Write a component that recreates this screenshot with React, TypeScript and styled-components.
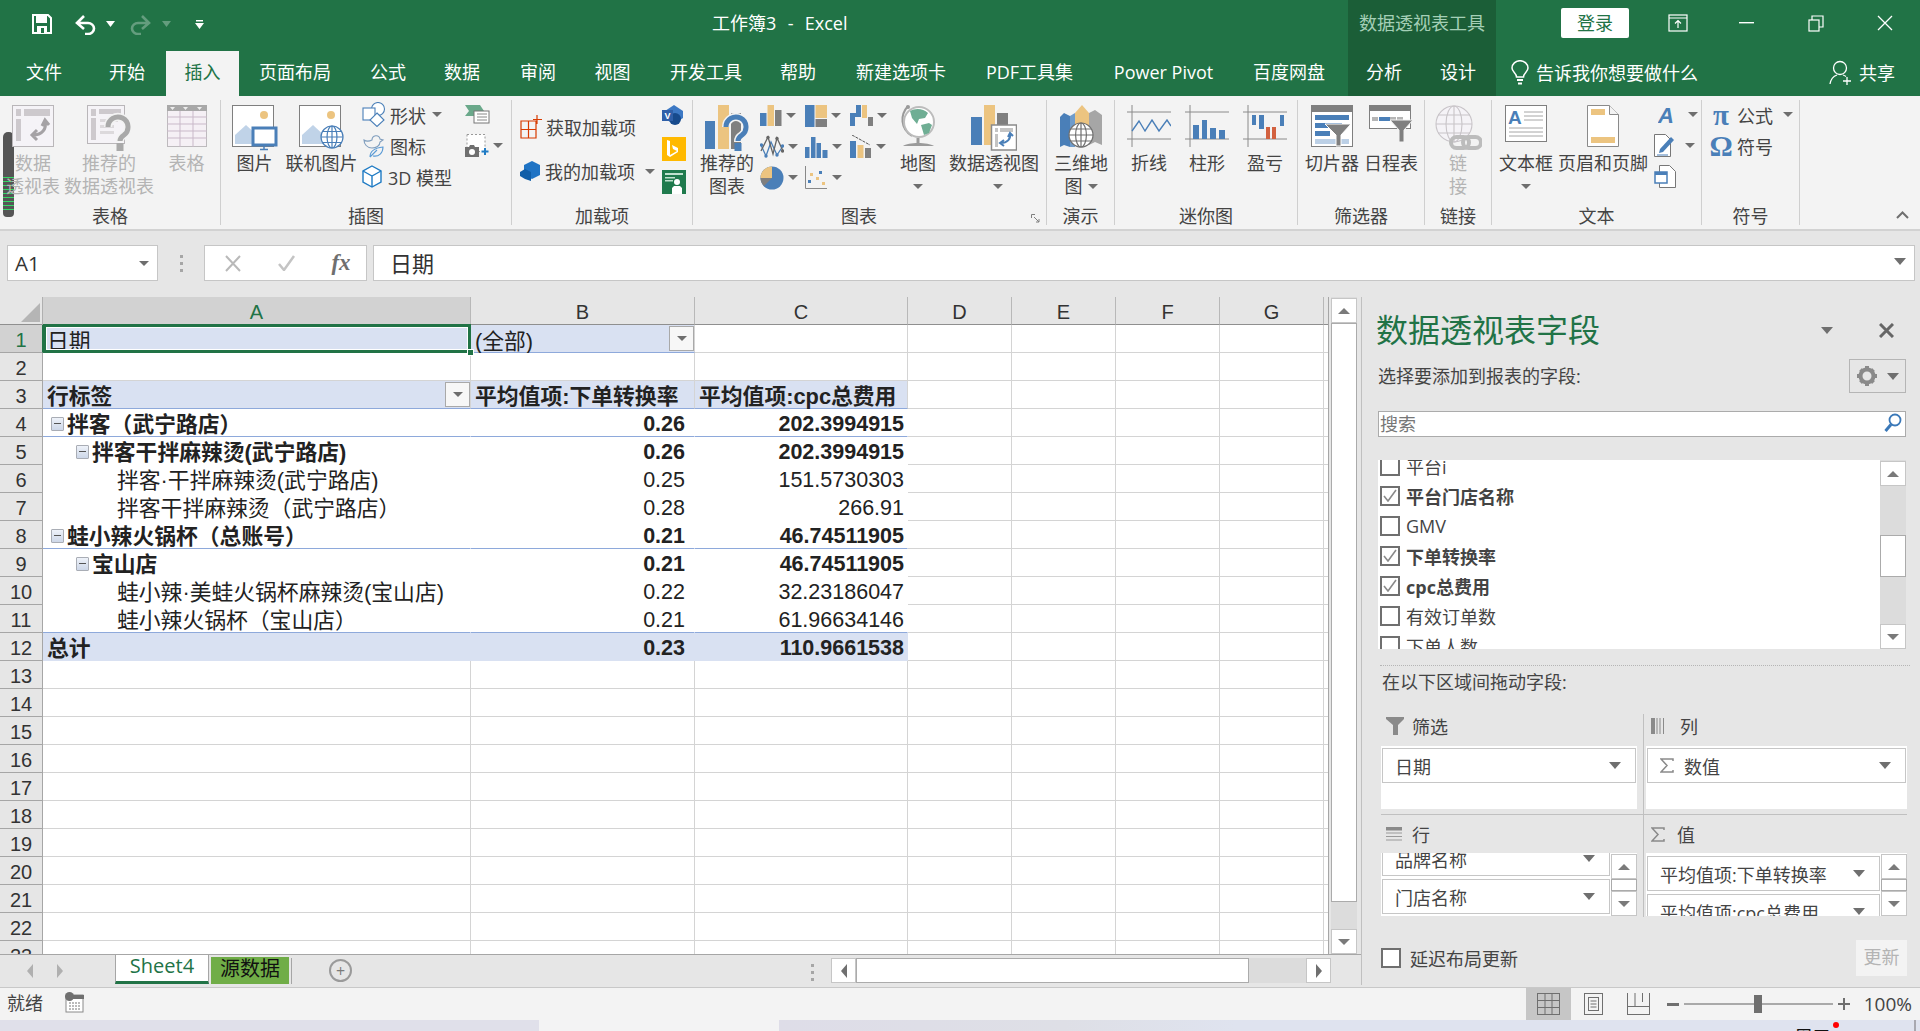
import React from 'react';
import styled, {createGlobalStyle} from 'styled-components';

const UI = `"Open Sans", "Noto Sans CJK SC", sans-serif`;
const CELL = `"Liberation Sans", "Noto Sans CJK SC", sans-serif`;
const GREEN = '#217346';
const BLUE = '#4a7fb8';
const TAN = '#ecc480';
const GREY = '#7f7f7f';
const FILL = '#d9e1f2';
const EDGE = '#8ea9db';
const GRID = '#d4d4d4';

const Global = createGlobalStyle`
  html, body { margin: 0; padding: 0; background: #e6e6e6; }
  body { width: 1920px; height: 1031px; overflow: hidden; font-family: ${UI}; }
  svg { display: block; flex: none; }
  * { box-sizing: border-box; }
`;

const Page = styled.div`
  width: 1920px;
  height: 1031px;
  display: flex;
  flex-direction: column;
  position: relative;
  overflow: hidden;
`;

/* ---------- title bar + tabs ---------- */
const Header = styled.header`
  background: ${GREEN};
  color: #fff;
  height: 96px;
  display: flex;
  flex-direction: column;
`;
const TitleRow = styled.div`
  height: 51px;
  display: flex;
  align-items: stretch;
`;
const Qat = styled.div`
  width: 712px;
  flex: none;
  padding: 0 0 3px 32px;
  display: flex;
  align-items: center;
`;
const QatGap = styled.span<{$w: number}>`
  display: block;
  width: ${p => p.$w}px;
  flex: none;
`;
const Title = styled.div`
  width: 636px;
  flex: none;
  font-size: 18px;
  line-height: 46px;
  white-space: pre;
  word-spacing: 1px;
`;
const ToolsBand = styled.div`
  width: 148px;
  flex: none;
  background: #1b5e37;
  color: #a4cfb6;
  font-size: 18px;
  line-height: 46px;
  text-align: center;
  white-space: nowrap;
`;
const WindowBtns = styled.div`
  flex: 1;
  display: flex;
  align-items: center;
  padding: 0 0 5px 65px;
`;
const Login = styled.div`
  width: 68px;
  height: 30px;
  flex: none;
  background: #fff;
  border-radius: 2px;
  color: ${GREEN};
  font-size: 18px;
  line-height: 30px;
  text-align: center;
  margin-right: 14px;
`;
const WinIcon = styled.div`
  width: 69px;
  flex: none;
  display: flex;
  justify-content: center;
`;
const TabRow = styled.nav`
  height: 45px;
  display: flex;
  align-items: stretch;
`;
const Tab = styled.div<{$w: number; $active?: boolean}>`
  width: ${p => p.$w}px;
  flex: none;
  font-size: 18px;
  line-height: 42px;
  text-align: center;
  white-space: nowrap;
  background: ${p => (p.$active ? '#f3f3f3' : 'transparent')};
  color: ${p => (p.$active ? GREEN : '#fff')};
`;
const ContextTabs = styled.div`
  width: 148px;
  flex: none;
  margin-left: 8px;
  background: #1b5e37;
  display: flex;
`;
const TellMe = styled.div`
  display: flex;
  align-items: center;
  gap: 7px;
  font-size: 18px;
  margin-left: 15px;
  padding-bottom: 3px;
  width: 318px;
  flex: none;
  white-space: nowrap;
`;
const Share = styled.div`
  display: flex;
  align-items: center;
  gap: 6px;
  font-size: 18px;
  padding-bottom: 3px;
  white-space: nowrap;
`;

/* ---------- ribbon ---------- */
const Ribbon = styled.section`
  height: 135px;
  background: #f3f3f3;
  border-bottom: 2px solid #d2d2d2;
  padding-top: 4px;
  display: flex;
  color: #444;
  font-size: 18px;
  position: relative;
`;
const Group = styled.div<{$w: number}>`
  width: ${p => p.$w}px;
  height: 125px;
  flex: none;
  border-right: 1px solid #cfcfcf;
  display: flex;
  flex-direction: column;
  position: relative;
`;
const GroupBody = styled.div<{$pl?: number}>`
  height: 107px;
  display: flex;
  padding-left: ${p => p.$pl ?? 0}px;
`;
const GroupLabel = styled.div<{$pr?: number}>`
  height: 18px;
  line-height: 18px;
  text-align: center;
  white-space: nowrap;
  padding-right: ${p => p.$pr ?? 0}px;
`;
const Large = styled.div<{$w: number; $off?: boolean}>`
  width: ${p => p.$w}px;
  flex: none;
  display: flex;
  flex-direction: column;
  align-items: center;
  padding-top: 5px;
  color: ${p => (p.$off ? '#b4b4b4' : '#444')};
`;
const LargeIcon = styled.div`
  height: 47px;
  display: flex;
  align-items: flex-start;
  justify-content: center;
`;
const LargeLine = styled.div`
  height: 23px;
  line-height: 23px;
  white-space: nowrap;
  display: flex;
  align-items: center;
  gap: 5px;
`;
const Caret = styled.span<{$m?: number}>`
  display: block;
  flex: none;
  width: 0;
  height: 0;
  border-left: 5px solid transparent;
  border-right: 5px solid transparent;
  border-top: 5px solid #6e6e6e;
  margin-left: ${p => p.$m ?? 0}px;
`;
const SmallCol = styled.div<{$w: number; $rh?: number; $pt?: number; $pl?: number}>`
  width: ${p => p.$w}px;
  flex: none;
  display: flex;
  flex-direction: column;
  padding-top: ${p => p.$pt ?? 0}px;
  padding-left: ${p => p.$pl ?? 0}px;
  > * { height: ${p => p.$rh ?? 31}px; }
`;
const SmallRow = styled.div<{$gap?: number}>`
  display: flex;
  align-items: center;
  gap: ${p => p.$gap ?? 3}px;
  white-space: nowrap;
  padding-bottom: 2px;
`;
const ChartGrid = styled.div`
  width: 135px;
  flex: none;
  margin-left: 7px;
  display: grid;
  grid-template-columns: repeat(3, 45px);
  grid-auto-rows: 31px;
`;
const ChartCell = styled.div`
  display: flex;
  align-items: center;
  gap: 4px;
`;
const Launcher = styled.div`
  position: absolute;
  right: 6px;
  bottom: 2px;
`;
const Collapse = styled.div`
  margin-left: auto;
  align-self: flex-end;
  padding: 0 11px 10px 0;
`;
const MeterWidget = styled.div`
  position: absolute;
  left: 3px;
  top: 36px;
  width: 11px;
  height: 85px;
  border-radius: 5px 5px 4px 4px;
  background: #555;
  padding-top: 45px;
  overflow: hidden;
`;
const MeterTicks = styled.div`
  height: 36px;
  background: repeating-linear-gradient(to bottom, #35d765 0 1px, #555 1px 4px);
`;
const SymbolGlyph = styled.span`
  flex: 0 0 20px;
  width: 20px;
  min-width: 0;
  display: flex;
  justify-content: center;
  font-family: "Liberation Serif", serif;
  font-weight: 700;
  font-size: 29px;
  line-height: 24px;
  color: ${BLUE};
`;

/* ---------- formula bar ---------- */
const FormulaZone = styled.div`
  height: 66px;
  padding: 14px 5px 0 7px;
  display: flex;
  align-items: flex-start;
  background: #e6e6e6;
`;
const NameBox = styled.div`
  width: 151px;
  height: 36px;
  background: #fff;
  border: 1px solid #c6c6c6;
  display: flex;
  align-items: center;
  justify-content: space-between;
  padding: 0 8px 0 7px;
  font-size: 20.500px;
  color: #333;
`;
const BarDots = styled.div`
  width: 46px;
  height: 36px;
  display: flex;
  flex-direction: column;
  align-items: center;
  justify-content: center;
  gap: 4px;
  > i { display: block; width: 3px; height: 3px; background: #a6a6a6; }
`;
const FxBox = styled.div`
  width: 163px;
  height: 36px;
  background: #fff;
  border: 1px solid #c6c6c6;
  display: grid;
  grid-template-columns: 55px 54px 54px;
  align-items: center;
  justify-items: center;
  color: #888;
`;
const FxMark = styled.span`
  font-family: "Liberation Serif", serif;
  font-style: italic;
  font-weight: 700;
  font-size: 23px;
  color: #6f6f6f;
`;
const FormulaInput = styled.div`
  flex: 1;
  margin-left: 6px;
  height: 36px;
  background: #fff;
  border: 1px solid #c6c6c6;
  display: flex;
  align-items: center;
  justify-content: space-between;
  padding: 0 8px 3px 16px;
  font-size: 22px;
  color: #333;
`;

/* ---------- sheet ---------- */
const Main = styled.main`
  height: 690px;
  display: flex;
`;
const SheetCol = styled.div`
  width: 1361px;
  flex: none;
  display: flex;
  flex-direction: column;
`;
const SheetTop = styled.div`
  height: 657px;
  display: flex;
  background: #e6e6e6;
`;
const SheetGrid = styled.div`
  width: 1329px;
  height: 657px;
  overflow: hidden;
  flex: none;
  display: grid;
  grid-template-columns: 43px 428px 224px 213px 104px 104px 104px 104px 5px;
  grid-auto-rows: 28px;
  background: #fff;
  border-right: 1px solid #a6a6a6;
  font-family: ${CELL};
  color: #222;
`;
const Corner = styled.div`
  background: #e6e6e6;
  border-right: 1px solid #b0b0b0;
  border-bottom: 1px solid #8f8f8f;
  padding: 6px 0 0 21px;
`;
const ColHead = styled.div<{$on?: boolean}>`
  background: ${p => (p.$on ? '#d2d2d2' : '#e6e6e6')};
  color: ${p => (p.$on ? GREEN : '#333')};
  border-right: 1px solid #b8b8b8;
  border-bottom: 1px solid ${p => (p.$on ? GREEN : '#8f8f8f')};
  text-align: center;
  font-size: 20px;
  line-height: 31px;
`;
const RowHead = styled.div<{$on?: boolean}>`
  background: ${p => (p.$on ? '#d2d2d2' : '#e6e6e6')};
  color: ${p => (p.$on ? GREEN : '#333')};
  border-right: 1px solid ${p => (p.$on ? GREEN : '#a6a6a6')};
  border-bottom: 1px solid #a6a6a6;
  text-align: center;
  font-size: 20px;
  line-height: 31px;
`;
const Cell = styled.div<{$fill?: boolean; $edge?: boolean; $plain?: boolean; $num?: boolean; $bold?: boolean; $pr?: number; $pt?: number}>`
  background: ${p => (p.$fill ? FILL : '#fff')};
  border-right: 1px solid ${p => (p.$plain ? 'transparent' : GRID)};
  border-bottom: 1px solid ${p => (p.$edge ? EDGE : p.$plain ? 'transparent' : GRID)};
  font-weight: ${p => (p.$bold ? 700 : 400)};
  font-size: ${p => (p.$num ? 21.5 : 21.8)}px;
  display: flex;
  align-items: center;
  justify-content: ${p => (p.$num ? 'flex-end' : 'flex-start')};
  padding: ${p => p.$pt ?? (p.$num ? 3 : 0)}px ${p => p.$pr ?? 4}px 0 4px;
  white-space: nowrap;
  position: relative;
  min-width: 0;
`;
const SelectedCell = styled(Cell)`
  &::after {
    content: '';
    position: absolute;
    inset: -1px -1px -1px 0;
    border: 3px solid ${GREEN};
    box-shadow: inset 0 0 0 1px #fff;
    pointer-events: none;
  }
`;
const FillHandle = styled.span`
  position: absolute;
  right: -4px;
  bottom: -4px;
  width: 7px;
  height: 7px;
  background: ${GREEN};
  border: 1px solid #fff;
  z-index: 2;
`;
const Indent = styled.span<{$w: number}>`
  display: flex;
  align-items: center;
  justify-content: flex-end;
  width: ${p => p.$w}px;
  flex: none;
  padding: 2px 3px 0 0;
`;
const Expander = styled.span`
  display: block;
  width: 13px;
  height: 14px;
  flex: none;
  background: linear-gradient(#eef2f9, #cdd7e8);
  border: 1px solid #a9adb5;
  border-radius: 1px;
  position: relative;
  &::after {
    content: '';
    position: absolute;
    left: 2px;
    right: 2px;
    top: 5px;
    height: 1px;
    background: #555;
  }
`;
const FilterBtn = styled.span`
  position: absolute;
  right: 0;
  top: 1px;
  width: 25px;
  height: 25px;
  background: #f7f7f7;
  border: 1px solid #a9a9a9;
  display: flex;
  align-items: center;
  justify-content: center;
`;

/* ---------- scroll bars ---------- */
const VScroll = styled.div`
  width: 26px;
  margin-left: 2px;
  display: flex;
  flex-direction: column;
  background: #dcdcdc;
  padding-top: 1px;
`;
const ScrollBtn = styled.div<{$h?: number}>`
  height: ${p => p.$h ?? 25}px;
  flex: none;
  background: #fff;
  border: 1px solid #c6c6c6;
  display: flex;
  align-items: center;
  justify-content: center;
`;
const ScrollThumb = styled.div<{$h: number; $mt?: number}>`
  height: ${p => p.$h}px;
  flex: none;
  background: #fff;
  border: 1px solid #ababab;
  margin-top: ${p => p.$mt ?? 0}px;
`;
const ScrollFill = styled.div`
  flex: 1;
`;
const Up = styled.span`
  display: block;
  width: 0;
  height: 0;
  border-left: 6px solid transparent;
  border-right: 6px solid transparent;
  border-bottom: 6px solid #7a7a7a;
`;
const Down = styled(Up)`
  border-bottom: 0;
  border-top: 6px solid #7a7a7a;
`;
const LeftTri = styled.span`
  display: block;
  width: 0;
  height: 0;
  border-top: 7px solid transparent;
  border-bottom: 7px solid transparent;
  border-right: 6px solid #6f6f6f;
`;
const RightTri = styled(LeftTri)`
  border-right: 0;
  border-left: 6px solid #6f6f6f;
`;

/* ---------- sheet tabs ---------- */
const TabsBar = styled.div`
  height: 33px;
  display: flex;
  background: #e6e6e6;
  border-top: 1px solid #a6a6a6;
`;
const TabNav = styled.div`
  width: 115px;
  flex: none;
  display: flex;
  align-items: center;
  padding: 0 0 0 27px;
  gap: 24px;
  opacity: 0.45;
`;
const SheetTab = styled.div`
  width: 94px;
  height: 29px;
  background: #fff;
  border-left: 1px solid #a6a6a6;
  border-right: 1px solid #a6a6a6;
  border-bottom: 3px solid ${GREEN};
  color: ${GREEN};
  font-size: 20px;
  line-height: 22px;
  text-align: center;
`;
const SheetTabColored = styled.div`
  width: 78px;
  height: 27px;
  margin: 2px 0 0 2px;
  background: #70ad47;
  color: #111;
  font-size: 20px;
  line-height: 24px;
  text-align: center;
`;
const TabSep = styled.div`
  width: 1px;
  height: 26px;
  margin: 3px 0 0 2px;
  background: #a6a6a6;
`;
const AddSheet = styled.div`
  width: 23px;
  height: 23px;
  margin: 4px 0 0 37px;
  border: 2px solid #9a9a9a;
  border-radius: 50%;
  color: #7a7a7a;
  display: flex;
  align-items: center;
  justify-content: center;
`;
const TabDots = styled.div`
  width: 3px;
  margin: 9px 0 0 459px;
  display: flex;
  flex-direction: column;
  gap: 4px;
  > i { display: block; width: 3px; height: 3px; background: #a6a6a6; }
`;
const HScroll = styled.div`
  width: 500px;
  height: 25px;
  margin: 3px 0 0 17px;
  background: #dcdcdc;
  display: flex;
`;
const HBtn = styled.div`
  width: 25px;
  flex: none;
  background: #fff;
  border: 1px solid #c6c6c6;
  display: flex;
  align-items: center;
  justify-content: center;
`;
const HThumb = styled.div`
  width: 393px;
  flex: none;
  background: #fff;
  border: 1px solid #ababab;
`;

/* ---------- pivot pane ---------- */
const Pane = styled.aside`
  width: 559px;
  flex: none;
  background: #e6e6e6;
  border-left: 1px solid #c0c0c0;
  margin-bottom: 2px;
  padding: 13px 14px 0 16px;
  color: #444;
  font-size: 18px;
  display: flex;
  flex-direction: column;
`;
const PaneTitleRow = styled.div`
  height: 40px;
  display: flex;
  align-items: center;
  margin-bottom: 9px;
`;
const PaneTitle = styled.h2`
  margin: 0 0 0 -2px;
  font-size: 32px;
  font-weight: 400;
  color: ${GREEN};
  width: 445px;
  line-height: 40px;
  white-space: nowrap;
`;
const PaneClose = styled.div`
  margin-left: 46px;
`;
const FieldHead = styled.div`
  height: 34px;
  display: flex;
  align-items: center;
  justify-content: space-between;
  margin-bottom: 18px;
`;
const FieldHint = styled.span`
  margin-top: -2px;
`;
const GearBtn = styled.div`
  width: 57px;
  height: 34px;
  border: 1px solid #b5b5b5;
  display: flex;
  align-items: center;
  justify-content: center;
  gap: 10px;
`;
const SearchBox = styled.div`
  height: 26px;
  background: #fff;
  border: 1px solid #ababab;
  display: flex;
  align-items: center;
  justify-content: space-between;
  padding: 0 3px 2px 1px;
  color: #777;
  margin-bottom: 23px;
`;
const FieldList = styled.div`
  height: 189px;
  background: #fff;
  display: flex;
  overflow: hidden;
  margin-bottom: 16px;
`;
const FieldRows = styled.div`
  flex: 1;
  margin-top: -8px;
  padding-left: 2px;
`;
const FieldRow = styled.div<{$on?: boolean}>`
  height: 30px;
  display: flex;
  align-items: center;
  gap: 6px;
  padding-bottom: 2px;
  font-weight: ${p => (p.$on ? 700 : 400)};
  white-space: nowrap;
`;
const Check = styled.span`
  width: 20px;
  height: 20px;
  flex: none;
  border: 2px solid #6f6f6f;
  background: #fff;
  display: flex;
  align-items: center;
  justify-content: center;
  margin-top: -1px;
`;
const Dotted = styled.div`
  height: 1px;
  margin-left: 2px;
  margin-right: -4px;
  border-top: 1px dotted #b5b5b5;
`;
const DragLabel = styled.div`
  height: 34px;
  line-height: 33px;
  margin: 0 0 14px 4px;
`;
const Areas = styled.div`
  margin-left: 3px;
  width: 526px;
  display: grid;
  grid-template-columns: 263px 263px;
  grid-template-rows: 101px 102px;
`;
const Area = styled.div<{$left?: boolean; $top?: boolean}>`
  border-right: ${p => (p.$left ? '1px solid #c0c0c0' : '0')};
  border-bottom: ${p => (p.$top ? '1px solid #c0c0c0' : '0')};
  padding-left: ${p => (p.$left ? 0 : 2)}px;
  display: flex;
  flex-direction: column;
`;
const AreaHead = styled.div<{$top?: boolean; $gap?: number}>`
  height: ${p => (p.$top ? 32 : 38)}px;
  flex: none;
  padding: 0 0 ${p => (p.$top ? 8 : 0)}px 5px;
  display: flex;
  align-items: center;
  gap: ${p => p.$gap ?? 8}px;
`;
const AreaBox = styled.div<{$w: number}>`
  width: ${p => p.$w}px;
  height: 63px;
  background: #fff;
  overflow: hidden;
  padding: 2px 1px;
`;
const AreaList = styled.div<{$w?: number}>`
  height: 63px;
  width: ${p => p.$w ?? 256}px;
  display: flex;
  gap: 1px;
  overflow: hidden;
  background: #fff;
`;
const AreaItems = styled.div<{$offset: number}>`
  flex: 1;
  min-width: 0;
  margin-top: ${p => p.$offset}px;
  display: flex;
  flex-direction: column;
  gap: 3px;
  padding-left: 1px;
`;
const AreaItem = styled.div`
  height: 35px;
  flex: none;
  background: #fff;
  border: 1px solid #c6c6c6;
  display: flex;
  align-items: center;
  padding: 0 14px 0 12px;
  white-space: nowrap;
  justify-content: space-between;
`;
const ItemText = styled.span`
  display: flex;
  align-items: center;
  gap: 10px;
`;
const AreaScroll = styled.div`
  width: 26px;
  flex: none;
  display: flex;
  flex-direction: column;
  padding-top: 1px;
  background: #fff;
`;
const PaneFoot = styled.div`
  margin: 23px 0 0 3px;
  width: 526px;
  height: 36px;
  display: flex;
  align-items: center;
  justify-content: space-between;
`;
const Deferred = styled.div`
  display: flex;
  align-items: center;
  gap: 9px;
`;
const UpdateBtn = styled.div`
  width: 51px;
  height: 36px;
  background: #f3f3f3;
  color: #b4b4b4;
  line-height: 34px;
  text-align: center;
`;

/* ---------- status bar ---------- */
const Status = styled.footer`
  height: 33px;
  background: #f3f3f3;
  border-top: 1px solid #c8c8c8;
  display: flex;
  align-items: center;
  padding-left: 7px;
  font-size: 18px;
  color: #444;
`;
const StatusLeft = styled.div`
  display: flex;
  align-items: center;
  gap: 22px;
  margin-top: -4px;
`;
const StatusRight = styled.div`
  margin-left: auto;
  height: 100%;
  display: flex;
  align-items: center;
  padding-right: 8px;
`;
const ViewBtn = styled.div<{$on?: boolean}>`
  width: 45px;
  height: 100%;
  background: ${p => (p.$on ? '#c6c6c6' : 'transparent')};
  display: flex;
  align-items: center;
  justify-content: center;
`;
const ZoomTrack = styled.div`
  width: 149px;
  height: 2px;
  margin: 0 5px;
  background: #a9a9a9;
  position: relative;
`;
const ZoomThumb = styled.span`
  position: absolute;
  left: 70px;
  top: -8px;
  width: 8px;
  height: 18px;
  background: #6f6f6f;
`;
const ZoomValue = styled.span`
  margin-left: 14px;
  font-size: 19px;
`;
const DeskStrip = styled.div`
  height: 11px;
  display: flex;
  overflow: hidden;
`;
const DeskLeft = styled.div`
  width: 539px;
  background: #e0e0ea;
`;
const DeskGap = styled.div`
  width: 240px;
  background: #f3f3f4;
`;
const DeskRight = styled.div`
  flex: 1;
  background: linear-gradient(90deg, #dedde8 0%, #dedfe6 25%, #dfe3ef 40%, #dfe3ef 100%);
  display: flex;
  align-items: flex-start;
  padding-left: 965px;
`;
const Clock = styled.div`
  width: 76px;
  font-size: 18px;
  line-height: 20px;
  padding-top: 7px;
  color: #111;
  white-space: nowrap;
`;
const RedDot = styled.span`
  width: 6px;
  height: 6px;
  margin: 2px 0 0 13px;
  border-radius: 50%;
  background: #f00;
`;
const DeskEdge = styled.span`
  width: 2px;
  height: 11px;
  margin-left: 75px;
  background: #a8a8b0;
`;

/* ---------- icons ---------- */
const Floppy = () => (
  <svg width="20" height="20" viewBox="0 0 20 20">
    <path d="M1 1h15l3 3v15H1z" fill="none" stroke="#fff" strokeWidth="2" />
    <rect x="4" y="2" width="11" height="7" fill="#fff" />
    <rect x="5" y="12" width="10" height="7" fill="#fff" />
    <rect x="9" y="14" width="3" height="5" fill={GREEN} />
  </svg>
);
const UndoIcon = ({dim}: {dim?: boolean}) => (
  <svg width="22" height="21" viewBox="0 0 22 21" opacity={dim ? 0.3 : 1}>
    <path
      d={dim ? 'M13 2l7 7-7 6M20 9H9a6 5.500 0 0 0 0 11h3' : 'M9 2 2 9l7 6M2 9h11a6 5.500 0 0 1 0 11h-3'}
      fill="none"
      stroke="#fff"
      strokeWidth="2.600"
    />
  </svg>
);
const WhiteCaret = ({dim}: {dim?: boolean}) => (
  <svg width="9" height="6" viewBox="0 0 9 6" opacity={dim ? 0.3 : 1}><path d="M0 0h9L4.500 6z" fill="#fff" /></svg>
);
const Customize = () => (
  <svg width="9" height="9" viewBox="0 0 9 9"><path d="M1 0h7v1.500H1zM0 3h9L4.500 9z" fill="#fff" /></svg>
);
const DisplayOpts = () => (
  <svg width="20" height="18" viewBox="0 0 20 18" fill="none" stroke="#fff" strokeWidth="1.200">
    <rect x="1" y="1" width="18" height="16" /><path d="M1 4h18M10 14V7M7 9.500 10 6.500l3 3" />
  </svg>
);
const MinIcon = () => (<svg width="15" height="2" viewBox="0 0 15 2"><rect width="15" height="1.400" fill="#fff" /></svg>);
const MaxIcon = () => (
  <svg width="16" height="17" viewBox="0 0 16 17" fill="none" stroke="#fff" strokeWidth="1.200">
    <rect x="1" y="5" width="10" height="11" /><path d="M4 5V1h11v11h-4" />
  </svg>
);
const CloseIcon = () => (<svg width="16" height="16" viewBox="0 0 16 16"><path d="M1 1l14 14M15 1 1 15" stroke="#fff" strokeWidth="1.300" /></svg>);
const Bulb = () => (
  <svg width="18" height="25" viewBox="0 0 18 25" fill="none" stroke="#fff" strokeWidth="1.500">
    <path d="M5.500 17c0-4-4.500-5-4.500-9a8 7.300 0 0 1 16 0c0 4-4.500 5-4.500 9z" /><path d="M6 20h6M7 23.500h4" strokeWidth="2" />
  </svg>
);
const PersonPlus = () => (
  <svg width="24" height="25" viewBox="0 0 24 25" fill="none" stroke="#fff" strokeWidth="1.300">
    <circle cx="11" cy="8" r="6.500" /><path d="M1 24c1-6 4-8 7-9M14 15c1 .3 2 .8 3 1.600M18 17v8M14 21h8" />
  </svg>
);
const PivotOff = () => (
  <svg width="43" height="42" viewBox="0 0 43 42">
    <rect x=".5" y=".5" width="41" height="41" fill="#f5f3f7" stroke="#b9b6b9" />
    <path d="M4 4h5v7H4zM12 4h26v7H12zM4 14h5v22H4z" fill="#cdc9cd" />
    <path d="M33 16c2 8-3 14-12 14M30 21l3-6 4 5M25 25l-5 5 5 5" fill="none" stroke="#a5a2a5" strokeWidth="3" />
  </svg>
);
const RecoPivotOff = () => (
  <svg width="44" height="46" viewBox="0 0 44 46">
    <rect x=".5" y=".5" width="37" height="38" fill="#f5f3f7" stroke="#b9b6b9" />
    <path d="M4 4h5v7H4zM12 4h22v5H12zM4 13h5v22H4z" fill="#cdc9cd" />
    <path d="M13 14h18v3H13zM13 20h14v3H13zM13 26h14v3H13z" fill="#dcd9dc" />
    <path d="M21 22a10 10 0 1 1 16 8c-3 2-4 3-4 7" fill="none" stroke="#f3f3f3" strokeWidth="8" />
    <path d="M21 22a10 10 0 1 1 16 8c-3 2-4 3-4 6" fill="none" stroke="#a9a9a9" strokeWidth="5" />
    <rect x="29.500" y="38" width="7" height="8" fill="#a9a9a9" />
  </svg>
);
const TableOff = () => (
  <svg width="40" height="42" viewBox="0 0 40 42">
    <rect x=".5" y=".5" width="39" height="41" fill="#f5f0f5" stroke="#bdbabd" />
    <rect width="40" height="6" fill="#a8a8a8" />
    <path d="M3 2h5L5.500 5zM16 2h5l-2.500 3zM30 2h5l-2.500 3z" fill="#eee" />
    <path d="M0 12h40M0 19h40M0 26h40M0 33h40M13 6v36M26 6v36" stroke="#c9b9c9" />
  </svg>
);
const PictureBase = () => (
  <>
    <rect x=".5" y=".5" width="41" height="41" fill="#fff" stroke="#7f7f7f" />
    <circle cx="32" cy="10" r="4" fill={TAN} />
    <path d="M3 39V30l11-10 15 14v5z" fill="#c0d3e8" />
  </>
);
const PictureIcon = () => (
  <svg width="46" height="46" viewBox="0 0 46 46">
    <PictureBase />
    <rect x="21" y="23" width="23" height="17" fill="#fff" stroke={BLUE} strokeWidth="3" />
    <path d="M32 41v3M28 44.500h8" stroke={BLUE} strokeWidth="1.500" />
  </svg>
);
const GlobeLines = ({cx, cy, r, c = BLUE}: {cx: number; cy: number; r: number; c?: string}) => (
  <g fill="#fff" stroke={c} strokeWidth="1.200">
    <circle cx={cx} cy={cy} r={r} />
    <ellipse cx={cx} cy={cy} rx={r * 0.45} ry={r} fill="none" />
    <path d={`M${cx} ${cy - r}v${2 * r}M${cx - r} ${cy}h${2 * r}M${cx - r * 0.85} ${cy - r * 0.5}h${1.7 * r}M${cx - r * 0.85} ${cy + r * 0.5}h${1.7 * r}`} fill="none" />
  </g>
);
const OnlinePicture = () => (
  <svg width="46" height="46" viewBox="0 0 46 46">
    <PictureBase />
    <GlobeLines cx={33} cy={32} r={11} />
  </svg>
);
const ShapesIcon = () => (
  <svg width="25" height="25" viewBox="0 0 25 25" fill="#fff" stroke={BLUE} strokeWidth="1.100">
    <circle cx="16" cy="7" r="6.500" />
    <rect x="1" y="6" width="12" height="12" />
    <path d="M15 11l7 7-7 6.500-7-6.500z" />
  </svg>
);
const IconsIcon = () => (
  <svg width="25" height="25" viewBox="0 0 25 25" fill="none" stroke="#7f9dbd" strokeWidth="1.100">
    <path d="M2 7c3 2 6 1 8 0 0-5 7-6 8-1l3 1-3 2c0 4-4 6-8 6C5 15 2 11 2 7z" />
    <path d="M8 24c0-6 4-9 13-10 0 6-4 10-10 9M8 24l7-7" stroke="#5b9bd5" />
  </svg>
);
const CubeIcon = () => (
  <svg width="20" height="23" viewBox="0 0 20 23" fill="#fff" stroke="#1f7bc4" strokeWidth="1.400">
    <path d="M10 1l9 5v11l-9 5-9-5V6z" /><path d="M1 6l9 5 9-5M10 11v11" fill="none" />
  </svg>
);
const SmartArtIcon = () => (
  <svg width="25" height="19" viewBox="0 0 25 19">
    <path d="M0 0h15l4 6-4 5H0l4-5z" fill="#6aa88a" />
    <rect x="9" y="6" width="15" height="12" fill="#fff" stroke="#777" />
    <path d="M12 9h10M12 12h10M12 15h10" stroke="#888" />
  </svg>
);
const ScreenshotIcon = () => (
  <svg width="25" height="24" viewBox="0 0 25 24">
    <rect x="2" y=".5" width="18" height="17" fill="#fff" stroke="#999" strokeDasharray="2 2" />
    <path d="M0 13h4l1-2h4l1 2h4v10H0z" fill="#6f6f6f" />
    <circle cx="7" cy="18" r="3" fill="#fff" />
    <path d="M20 14v7M16.500 17.500h7" stroke="#1f7bc4" strokeWidth="2" />
  </svg>
);
const GetAddin = () => (
  <svg width="23" height="24" viewBox="0 0 23 24" fill="none" stroke="#d83b01" strokeWidth="1.200">
    <path d="M1 6h15v17H1zM1 14.500h15M8.500 6v17M17 0v9M13 4.500h9" />
  </svg>
);
const MyAddin = () => (
  <svg width="21" height="21" viewBox="0 0 21 21">
    <path d="M12 0l8 4v10l-8 4-8-4V4z" fill="#1f73c4" />
    <path d="M5 8l6 3v9l-6-2-5-3V11z" fill="#0f5ea8" />
  </svg>
);
const VisioIcon = () => (
  <svg width="23" height="21" viewBox="0 0 23 21">
    <path d="M12 0l9 6v7l-9 6-9-5V6z" fill="#3c78c4" />
    <circle cx="13" cy="14" r="6" fill="#174a8c" />
    <rect y="5" width="11" height="11" fill="#2f5fa8" />
    <text x="2.500" y="14" fontSize="9" fontWeight="700" fill="#fff" fontFamily="Liberation Sans">V</text>
  </svg>
);
const BingIcon = () => (
  <svg width="24" height="24" viewBox="0 0 24 24">
    <rect width="24" height="24" fill="#ffb900" />
    <path d="M8 4v14l7-4-4-2-1-4 6 3v4l-8 5-3-2V3z" fill="#fff" />
  </svg>
);
const PeopleIcon = () => (
  <svg width="24" height="24" viewBox="0 0 24 24">
    <rect width="24" height="24" fill="#1f7a4d" />
    <path d="M3 3h18v2H3zM3 7h10v1.500H3zM3 10h8v1.500H3z" fill="#bfe0ce" />
    <circle cx="15" cy="12" r="3" fill="#fff" />
    <path d="M10 24v-6l2-2h6l2 2v6z" fill="#fff" />
  </svg>
);
const RecoChart = () => (
  <svg width="44" height="46" viewBox="0 0 44 46">
    <rect y="16" width="10" height="28" fill={BLUE} />
    <rect x="13" width="11" height="44" fill={TAN} />
    <rect x="26" y="8" width="10" height="36" fill={GREY} />
    <path d="M21 22a10 10 0 1 1 16 8c-3 2-4 3-4 7" fill="none" stroke="#f3f3f3" strokeWidth="8" />
    <path d="M21 22a10 10 0 1 1 16 8c-3 2-4 3-4 6" fill="none" stroke={BLUE} strokeWidth="5" />
    <rect x="29.500" y="38" width="7" height="8" fill={BLUE} />
  </svg>
);
const C1 = () => (<svg width="22" height="22" viewBox="0 0 22 22"><rect y="8" width="6.500" height="13" fill={BLUE} /><rect x="7.500" width="6.500" height="21" fill={TAN} /><rect x="15" y="5" width="6.500" height="16" fill={GREY} /></svg>);
const C2 = () => (<svg width="22" height="22" viewBox="0 0 22 22"><rect width="9.500" height="22" fill={BLUE} /><rect x="10.500" width="11.500" height="13" fill={TAN} /><rect x="10.500" y="14" width="11.500" height="8" fill={GREY} /></svg>);
const C3 = () => (<svg width="23" height="22" viewBox="0 0 23 22"><rect y="8" width="5" height="13" fill={BLUE} /><rect x="6" width="5" height="12" fill={BLUE} /><rect x="12" y="0" width="5" height="13" fill={TAN} /><rect x="18" y="12" width="5" height="9" fill={GREY} /><rect y="8" width="11" height="4" fill={BLUE} /></svg>);
const C4 = () => (
  <svg width="24" height="24" viewBox="0 0 24 24" fill="none" strokeWidth="1.300">
    <path d="M1 10l5 11 5-14 6 13 6-9" stroke={BLUE} />
    <path d="M1 16l7-14 5 17 4-16 6 13" stroke="#666" />
    <g fill={BLUE}><circle cx="1.500" cy="10" r="1.700" /><circle cx="6" cy="21" r="1.700" /><circle cx="17" cy="20" r="1.700" /><circle cx="22.500" cy="11" r="1.700" /></g>
    <g fill="#666"><circle cx="8" cy="2.500" r="1.700" /><circle cx="17" cy="3.500" r="1.700" /><circle cx="22.500" cy="16" r="1.700" /></g>
  </svg>
);
const C5 = () => (<svg width="23" height="22" viewBox="0 0 23 22" fill={BLUE}><rect y="11" width="4.500" height="11" /><rect x="6" y="1" width="4.500" height="21" /><rect x="11.500" y="7" width="4.500" height="15" /><rect x="17.500" y="14" width="5" height="8" /></svg>);
const C6 = () => (
  <svg width="22" height="23" viewBox="0 0 22 23">
    <rect y="6" width="6" height="17" fill={BLUE} /><rect x="7.500" y="10" width="6" height="13" fill={TAN} /><rect x="15" y="13" width="6" height="10" fill={GREY} />
    <path d="M2 0l9 5 9 5" stroke="#555" strokeWidth="1" fill="none" strokeDasharray="3 1" />
  </svg>
);
const C7 = () => (
  <svg width="24" height="24" viewBox="0 0 24 24">
    <circle cx="12" cy="12" r="11.500" fill={BLUE} />
    <path d="M12 12V.5A11.500 11.500 0 0 0 .5 12z" fill={TAN} />
    <path d="M12 12H.5a11.500 11.500 0 0 0 3.500 8z" fill={GREY} />
  </svg>
);
const C8 = () => (
  <svg width="23" height="23" viewBox="0 0 23 23">
    <path d="M.5 0v22.500H22" stroke="#888" fill="none" />
    <g fill={TAN}><rect x="5" y="7" width="3" height="3" /><rect x="11" y="11" width="3" height="3" /><rect x="17" y="16" width="3" height="3" /></g>
    <g fill={BLUE}><rect x="3" y="14" width="3" height="3" /><rect x="14" y="5" width="3" height="3" /></g>
  </svg>
);
const GlobeStand = () => (
  <svg width="36" height="42" viewBox="0 0 36 42">
    <path d="M8 1c-8 9-8 22 4 30" fill="none" stroke="#9a9a9a" strokeWidth="2" />
    <circle cx="8" cy="2" r="2" fill="#9a9a9a" />
    <circle cx="19" cy="17" r="15" fill="#fff" stroke="#bcbcbc" strokeWidth="2" />
    <path d="M10 6c5-3 13-3 18 2l-3 5-6 1-2 5-5-6zM21 20l8-2 3 2-3 8-5 2z" fill="#6fae94" />
    <path d="M18 33v5" stroke="#9a9a9a" strokeWidth="3" />
    <path d="M3 41c5-4 25-4 31 0z" fill="#9a9a9a" />
  </svg>
);
const PivotChart = () => (
  <svg width="46" height="46" viewBox="0 0 46 46">
    <rect y="12" width="11" height="28" fill={BLUE} />
    <rect x="13" width="11" height="40" fill={TAN} />
    <rect x="26" y="8" width="11" height="32" fill={GREY} />
    <rect x="20.500" y="20" width="25" height="25" fill="#fff" stroke="#8a8a8a" strokeWidth="1.500" />
    <path d="M24 23h3v4h-3zM29 23h13v4H29zM24 29h3v13h-3z" fill="#c4c4c4" />
    <path d="M39 29c1 5-3 9-9 9M37 32l2-4 3 3M33 35l-4 3 4 3" fill="none" stroke={BLUE} strokeWidth="2" />
  </svg>
);
const Map3d = () => (
  <svg width="42" height="43" viewBox="0 0 42 43">
    <path d="M0 12l4-4 6 3v31l-6-2-4 2z" fill={BLUE} />
    <path d="M10 11l5-3v34l-5 0z" fill="#6f9ccb" />
    <path d="M15 8l7-8 7 8v24H15z" fill={TAN} />
    <path d="M29 8l6-3 7 5v30l-7-3-6 3z" fill="#a6a6a6" />
    <GlobeLines cx={21} cy={30} r={12} c="#6f6f6f" />
  </svg>
);
const Sparks = ({kind}: {kind: 'line' | 'col' | 'win'}) => (
  <svg width="44" height="42" viewBox="0 0 44 42">
    <path d="M0 7h44M0 34h44M5 0v42" stroke="#8a8a8a" fill="none" />
    {kind === 'line' && <path d="M5 26l7-10 6 10 7-11 7 11 8-11 4 6" fill="none" stroke={BLUE} strokeWidth="1.400" />}
    {kind === 'col' && <path d="M8 20h6v14H8zM17 15h5v19h-5zM25 23h6v11h-6zM34 25h6v9h-6z" fill={BLUE} />}
    {kind === 'win' && (
      <>
        <path d="M9 10h4v10H9zM16 10h5v14h-5zM37 10h4v11h-4z" fill={BLUE} />
        <path d="M23 22h4v12h-4zM29 22h4v12h-4z" fill="#d2613f" />
      </>
    )}
  </svg>
);
const Slicer = () => (
  <svg width="42" height="43" viewBox="0 0 42 43">
    <rect x=".5" y=".5" width="41" height="41" fill="#fff" stroke="#7f7f7f" />
    <rect width="42" height="7" fill="#7f7f7f" />
    <path d="M4 10h34v5H4zM4 18h27v5H4zM4 26h15v5H4z" fill={BLUE} />
    <rect x="4" y="34" width="34" height="5" fill="#bcd0e6" />
    <path d="M14 19h26l-10 11v11h-5V30z" fill="#7f7f7f" stroke="#fff" />
  </svg>
);
const Timeline = () => (
  <svg width="44" height="37" viewBox="0 0 44 37">
    <rect x=".5" y=".5" width="41" height="23" fill="#fff" stroke="#7f7f7f" />
    <rect width="42" height="6" fill="#7f7f7f" />
    <path d="M3 12h6v4H3zM21 12h6v4h-6zM28 12h6v4h-6z" fill="#b5b5b5" />
    <path d="M10 12h6v4h-6zM16 12h5v4h-5z" fill={BLUE} />
    <path d="M21 15h23l-9 10v12h-5V25z" fill="#7f7f7f" stroke="#f3f3f3" />
  </svg>
);
const LinkOff = () => (
  <svg width="47" height="46" viewBox="0 0 47 46">
    <g fill="#f5f3f7" stroke="#c8c4c8" strokeWidth="1.100">
      <circle cx="19" cy="19" r="18" />
      <ellipse cx="19" cy="19" rx="8" ry="18" fill="none" />
      <path d="M19 1v36M1 19h36M3 10h32M3 28h32" fill="none" />
    </g>
    <rect x="16" y="32" width="18" height="11" rx="5.500" fill="none" stroke="#bcbcbc" strokeWidth="4" />
    <rect x="28" y="32" width="18" height="11" rx="5.500" fill="none" stroke="#bcbcbc" strokeWidth="4" />
  </svg>
);
const TextBoxIcon = () => (
  <svg width="42" height="37" viewBox="0 0 42 37">
    <rect x=".5" y=".5" width="41" height="36" fill="#fff" stroke="#7f7f7f" />
    <text x="3" y="19" fontSize="19" fontWeight="700" fill={BLUE} fontFamily="Liberation Sans">A</text>
    <path d="M19 7h19M19 11h19M19 15h19M4 23h34M4 27h34M4 31h34" stroke="#a6a6a6" />
  </svg>
);
const HeaderFooter = () => (
  <svg width="32" height="42" viewBox="0 0 32 42">
    <path d="M.5.500h22l9 9v32H.5z" fill="#fff" stroke="#8a8a8a" />
    <path d="M22.500.5v9h9" fill="#f3f3f3" stroke="#8a8a8a" />
    <rect x="4" y="4" width="14" height="6" fill={TAN} />
    <rect x="4" y="32" width="24" height="6" fill={TAN} />
  </svg>
);
const WordArt = () => (
  <svg width="18" height="19" viewBox="0 0 18 19">
    <text x="0" y="18" fontSize="22" fontWeight="700" fontStyle="italic" fill={BLUE} fontFamily="Liberation Sans">A</text>
  </svg>
);
const SignLine = () => (
  <svg width="23" height="23" viewBox="0 0 23 23">
    <path d="M.5.500h11l5 5v17H.5z" fill="#fff" stroke="#777" />
    <path d="M5 19l1-4L17 3l3 3L9 18z" fill={BLUE} />
    <path d="M3 21h11" stroke={BLUE} />
  </svg>
);
const ObjectIcon = () => (
  <svg width="22" height="23" viewBox="0 0 22 23">
    <path d="M5.500.5h10l6 6v16h-16z" fill="#fff" stroke="#777" />
    <rect x="1" y="7" width="12" height="11" fill="#fff" stroke={BLUE} strokeWidth="1.500" />
    <rect x="1" y="7" width="12" height="3" fill={BLUE} />
  </svg>
);
const LaunchIcon = () => (
  <svg width="9" height="9" viewBox="0 0 9 9" fill="none" stroke="#7f7f7f"><path d="M.5 4V.5H4M3 3l5 5M8 5v3H5" /></svg>
);
const Chevron = () => (
  <svg width="13" height="8" viewBox="0 0 13 8"><path d="M1 7l5.500-5.500L12 7" fill="none" stroke="#6f6f6f" strokeWidth="2" /></svg>
);
const CrossIcon = () => (<svg width="16" height="17" viewBox="0 0 16 17"><path d="M1 1l14 15M15 1 1 16" stroke="#b9b9b9" strokeWidth="2" /></svg>);
const TickIcon = () => (<svg width="18" height="16" viewBox="0 0 18 16"><path d="M1 9l5 6L16 1" fill="none" stroke="#c4c4c4" strokeWidth="2.500" /></svg>);
const CornerTri = () => (<svg width="19" height="19" viewBox="0 0 19 19"><path d="M19 0v19H0z" fill="#b5b5b5" /></svg>);
const PaneX = () => (<svg width="15" height="15" viewBox="0 0 15 15"><path d="M1 1l13 13M14 1 1 14" stroke="#666" strokeWidth="3" /></svg>);
const Gear = () => (
  <svg width="20" height="20" viewBox="0 0 20 20">
    <circle cx="10" cy="10" r="6.500" fill="none" stroke="#8a8a8a" strokeWidth="4" />
    <path d="M8 0h4v4H8zM8 16h4v4H8zM0 8h4v4H0zM16 8h4v4h-4zM2 5l3-3 2 3-2 2zM18 15l-3 3-2-3 2-2zM15 2l3 3-3 2-2-2zM5 18l-3-3 3-2 2 2z" fill="#8a8a8a" />
  </svg>
);
const Lens = () => (
  <svg width="18" height="20" viewBox="0 0 18 20" fill="none" stroke="#3a78b8">
    <circle cx="11" cy="7" r="5.500" strokeWidth="1.800" /><path d="M7 11.500 1.500 18" strokeWidth="3" />
  </svg>
);
const CheckMark = () => (<svg width="14" height="13" viewBox="0 0 14 13"><path d="M1 7l4 5L13 1" fill="none" stroke="#8a8a8a" strokeWidth="1.600" /></svg>);
const FunnelMark = () => (<svg width="18" height="18" viewBox="0 0 18 18"><path d="M0 0h18v2l-6 6v10H7V8L0 2z" fill="#8a8a8a" /></svg>);
const ColsMark = () => (
  <svg width="14" height="16" viewBox="0 0 14 16"><path d="M0 0h4v16H0z" fill="#8a8a8a" /><path d="M6 0v16M9 0v16M12.500 0v16" stroke="#8a8a8a" /></svg>
);
const RowsMark = () => (
  <svg width="16" height="14" viewBox="0 0 16 14"><path d="M0 0h16v3.500H0z" fill="#8a8a8a" /><path d="M0 6h16M0 9.500h16M0 13h16" stroke="#9a9a9a" /></svg>
);
const SigmaMark = () => (<svg width="14" height="15" viewBox="0 0 14 15"><path d="M13 3V1H1l6 6.500L1 14h12v-2" fill="none" stroke="#8a8a8a" strokeWidth="1.500" /></svg>);
const DropTri = () => (<svg width="12" height="7" viewBox="0 0 12 7"><path d="M0 0h12L6 7z" fill="#6f6f6f" /></svg>);
const MacroIcon = () => (
  <svg width="19" height="21" viewBox="0 0 19 21">
    <rect x="1" y="3" width="17" height="17" fill="#fff" stroke="#8a8a8a" />
    <rect x="7" y="3" width="12" height="4" fill="#6f6f6f" />
    <circle cx="4.500" cy="4.500" r="4.500" fill="#6f6f6f" />
    <path d="M4 11h11M4 14h11M4 17h11" stroke="#777" strokeDasharray="2 1" />
  </svg>
);
const NormalView = () => (
  <svg width="23" height="22" viewBox="0 0 23 22" fill="none" stroke="#6f6f6f"><rect x=".5" y=".5" width="22" height="21" /><path d="M8 0v22M15 0v22M0 7.500h23M0 14.500h23" /></svg>
);
const PageView = () => (
  <svg width="19" height="22" viewBox="0 0 19 22" fill="none" stroke="#6f6f6f"><rect x=".5" y=".5" width="18" height="21" /><rect x="4.500" y="4.500" width="10" height="13" /><path d="M6.500 8h6M6.500 11h6M6.500 14h6" /></svg>
);
const BreakView = () => (
  <svg width="23" height="22" viewBox="0 0 23 22" fill="none" stroke="#6f6f6f"><path d="M.5 13.500h22M.5 21.500h22M.5 0v22M22.500 0v22M8 0v13.500M15.500 0v9" /></svg>
);

/* ---------- data ---------- */
const tabs: [string, number][] = [
  ['文件', 88], ['开始', 78], ['插入', 73], ['页面布局', 112], ['公式', 74], ['数据', 74], ['审阅', 78], ['视图', 71],
  ['开发工具', 116], ['帮助', 68], ['新建选项卡', 138], ['PDF工具集', 119], ['Power Pivot', 149], ['百度网盘', 102],
];

type Row = {a?: string; b?: string; c?: string; level?: number; bold?: boolean; fill?: boolean; edge?: boolean};
const pivotRows: Row[] = [
  {a: '拌客（武宁路店）', b: '0.26', c: '202.3994915', level: 0, bold: true, edge: true},
  {a: '拌客干拌麻辣烫(武宁路店)', b: '0.26', c: '202.3994915', level: 1, bold: true},
  {a: '拌客·干拌麻辣烫(武宁路店)', b: '0.25', c: '151.5730303', level: 2},
  {a: '拌客干拌麻辣烫（武宁路店）', b: '0.28', c: '266.91', level: 2},
  {a: '蛙小辣火锅杯（总账号）', b: '0.21', c: '46.74511905', level: 0, bold: true, edge: true},
  {a: '宝山店', b: '0.21', c: '46.74511905', level: 1, bold: true},
  {a: '蛙小辣·美蛙火锅杯麻辣烫(宝山店)', b: '0.22', c: '32.23186047', level: 2},
  {a: '蛙小辣火锅杯（宝山店）', b: '0.21', c: '61.96634146', level: 2, edge: true},
  {a: '总计', b: '0.23', c: '110.9661538', bold: true, fill: true},
];
const indentOf = [20, 45, 70];

const fields = [
  {name: '平台i'}, {name: '平台门店名称', on: true}, {name: 'GMV'}, {name: '下单转换率', on: true},
  {name: 'cpc总费用', on: true}, {name: '有效订单数'}, {name: '下单人数'},
];

const TailCells = () => (
  <>
    <Cell /><Cell /><Cell /><Cell /><Cell />
  </>
);

const Sheet: React.FC = () => (
  <SheetGrid>
    <Corner><CornerTri /></Corner>
    <ColHead $on>A</ColHead>
    {['B', 'C', 'D', 'E', 'F', 'G'].map(c => <ColHead key={c}>{c}</ColHead>)}
    <ColHead />

    <RowHead $on>1</RowHead>
    <SelectedCell $fill $plain $pt={2}>日期<FillHandle /></SelectedCell>
    <Cell $fill $edge $pt={2}>(全部)<FilterBtn><Caret /></FilterBtn></Cell>
    <Cell /><TailCells />

    <RowHead>2</RowHead>
    <Cell /><Cell /><Cell /><TailCells />

    <RowHead>3</RowHead>
    <Cell $fill $edge $bold>行标签<FilterBtn><Caret /></FilterBtn></Cell>
    <Cell $fill $edge $bold>平均值项:下单转换率</Cell>
    <Cell $fill $edge $bold>平均值项:cpc总费用</Cell>
    <TailCells />

    {pivotRows.map((r, i) => (
      <React.Fragment key={i}>
        <RowHead>{i + 4}</RowHead>
        <Cell $fill={r.fill} $edge={r.edge} $plain $bold={r.bold}>
          {r.level !== undefined && (
            <Indent $w={indentOf[r.level]}>{r.level < 2 && <Expander />}</Indent>
          )}
          {r.a}
        </Cell>
        <Cell $fill={r.fill} $edge={r.edge} $plain $num $bold={r.bold} $pr={9}>{r.b}</Cell>
        <Cell $fill={r.fill} $edge={r.edge} $plain $num $bold={r.bold} $pr={3}>{r.c}</Cell>
        <TailCells />
      </React.Fragment>
    ))}

    {Array.from({length: 11}, (_, i) => (
      <React.Fragment key={i}>
        <RowHead>{i + 13}</RowHead>
        <Cell /><Cell /><Cell /><TailCells />
      </React.Fragment>
    ))}
  </SheetGrid>
);

const FieldPane: React.FC = () => (
  <Pane>
    <PaneTitleRow>
      <PaneTitle>数据透视表字段</PaneTitle>
      <DropTri />
      <PaneClose><PaneX /></PaneClose>
    </PaneTitleRow>
    <FieldHead>
      <FieldHint>选择要添加到报表的字段:</FieldHint>
      <GearBtn><Gear /><DropTri /></GearBtn>
    </FieldHead>
    <SearchBox>搜索<Lens /></SearchBox>
    <FieldList>
      <FieldRows>
        {fields.map(f => (
          <FieldRow key={f.name} $on={f.on}>
            <Check>{f.on && <CheckMark />}</Check>
            {f.name}
          </FieldRow>
        ))}
      </FieldRows>
      <VScroll>
        <ScrollBtn><Up /></ScrollBtn>
        <ScrollThumb $h={42} $mt={49} />
        <ScrollFill />
        <ScrollBtn><Down /></ScrollBtn>
      </VScroll>
    </FieldList>
    <Dotted />
    <DragLabel>在以下区域间拖动字段:</DragLabel>
    <Areas>
      <Area $left $top>
        <AreaHead $top><FunnelMark />筛选</AreaHead>
        <AreaBox $w={256}>
          <AreaItem>日期<DropTri /></AreaItem>
        </AreaBox>
      </Area>
      <Area $top>
        <AreaHead $top $gap={15}><ColsMark />列</AreaHead>
        <AreaBox $w={261}>
          <AreaItem><ItemText><SigmaMark />数值</ItemText><DropTri /></AreaItem>
        </AreaBox>
      </Area>
      <Area $left>
        <AreaHead $gap={10}><RowsMark />行</AreaHead>
        <AreaList>
          <AreaItems $offset={-12}>
            <AreaItem>品牌名称<DropTri /></AreaItem>
            <AreaItem>门店名称<DropTri /></AreaItem>
          </AreaItems>
          <AreaScroll>
            <ScrollBtn><Up /></ScrollBtn>
            <ScrollThumb $h={12} />
            <ScrollBtn><Down /></ScrollBtn>
          </AreaScroll>
        </AreaList>
      </Area>
      <Area>
        <AreaHead $gap={12}><SigmaMark />值</AreaHead>
        <AreaList $w={261}>
          <AreaItems $offset={3}>
            <AreaItem>平均值项:下单转换率<DropTri /></AreaItem>
            <AreaItem>平均值项:cpc总费用<DropTri /></AreaItem>
          </AreaItems>
          <AreaScroll>
            <ScrollBtn><Up /></ScrollBtn>
            <ScrollThumb $h={12} />
            <ScrollBtn><Down /></ScrollBtn>
          </AreaScroll>
        </AreaList>
      </Area>
    </Areas>
    <PaneFoot>
      <Deferred><Check />延迟布局更新</Deferred>
      <UpdateBtn>更新</UpdateBtn>
    </PaneFoot>
  </Pane>
);

const ChartPick: React.FC<{icon: React.ReactNode}> = ({icon}) => (
  <ChartCell>{icon}<Caret /></ChartCell>
);

const RibbonBar: React.FC = () => (
  <Ribbon>
    <MeterWidget><MeterTicks /></MeterWidget>
    <Group $w={221}>
      <GroupBody>
        <Large $w={66} $off><LargeIcon><PivotOff /></LargeIcon><LargeLine>数据</LargeLine><LargeLine>透视表</LargeLine></Large>
        <Large $w={86} $off><LargeIcon><RecoPivotOff /></LargeIcon><LargeLine>推荐的</LargeLine><LargeLine>数据透视表</LargeLine></Large>
        <Large $w={69} $off><LargeIcon><TableOff /></LargeIcon><LargeLine>表格</LargeLine></Large>
      </GroupBody>
      <GroupLabel>表格</GroupLabel>
    </Group>
    <Group $w={291}>
      <GroupBody>
        <Large $w={67}><LargeIcon><PictureIcon /></LargeIcon><LargeLine>图片</LargeLine></Large>
        <Large $w={67}><LargeIcon><OnlinePicture /></LargeIcon><LargeLine>联机图片</LargeLine></Large>
        <SmallCol $w={110} $pl={7}>
          <SmallRow><ShapesIcon />形状<Caret $m={3} /></SmallRow>
          <SmallRow><IconsIcon />图标</SmallRow>
          <SmallRow $gap={6}><CubeIcon />3D 模型</SmallRow>
        </SmallCol>
        <SmallCol $w={46} $rh={31}>
          <SmallRow><SmartArtIcon /></SmallRow>
          <SmallRow><ScreenshotIcon /><Caret /></SmallRow>
        </SmallCol>
      </GroupBody>
      <GroupLabel>插图</GroupLabel>
    </Group>
    <Group $w={181}>
      <GroupBody $pl={8}>
        <SmallCol $w={142} $rh={44} $pt={6}>
          <SmallRow><GetAddin />获取加载项</SmallRow>
          <SmallRow $gap={4}><MyAddin />我的加载项<Caret $m={6} /></SmallRow>
        </SmallCol>
        <SmallCol $w={28} $rh={33}>
          <SmallRow><VisioIcon /></SmallRow>
          <SmallRow><BingIcon /></SmallRow>
          <SmallRow><PeopleIcon /></SmallRow>
        </SmallCol>
      </GroupBody>
      <GroupLabel>加载项</GroupLabel>
    </Group>
    <Group $w={354}>
      <GroupBody $pl={8}>
        <Large $w={52}><LargeIcon><RecoChart /></LargeIcon><LargeLine>推荐的</LargeLine><LargeLine>图表</LargeLine></Large>
        <ChartGrid>
          <ChartPick icon={<C1 />} /><ChartPick icon={<C2 />} /><ChartPick icon={<C3 />} />
          <ChartPick icon={<C4 />} /><ChartPick icon={<C5 />} /><ChartPick icon={<C6 />} />
          <ChartPick icon={<C7 />} /><ChartPick icon={<C8 />} />
        </ChartGrid>
        <Large $w={46}><LargeIcon><GlobeStand /></LargeIcon><LargeLine>地图</LargeLine><LargeLine><Caret /></LargeLine></Large>
        <Large $w={106}><LargeIcon><PivotChart /></LargeIcon><LargeLine>数据透视图</LargeLine><LargeLine><Caret $m={8} /></LargeLine></Large>
      </GroupBody>
      <GroupLabel $pr={21}>图表</GroupLabel>
      <Launcher><LaunchIcon /></Launcher>
    </Group>
    <Group $w={68}>
      <GroupBody>
        <Large $w={68}><LargeIcon><Map3d /></LargeIcon><LargeLine>三维地</LargeLine><LargeLine>图<Caret /></LargeLine></Large>
      </GroupBody>
      <GroupLabel>演示</GroupLabel>
    </Group>
    <Group $w={183}>
      <GroupBody $pl={5}>
        <Large $w={58}><LargeIcon><Sparks kind="line" /></LargeIcon><LargeLine>折线</LargeLine></Large>
        <Large $w={58}><LargeIcon><Sparks kind="col" /></LargeIcon><LargeLine>柱形</LargeLine></Large>
        <Large $w={58}><LargeIcon><Sparks kind="win" /></LargeIcon><LargeLine>盈亏</LargeLine></Large>
      </GroupBody>
      <GroupLabel>迷你图</GroupLabel>
    </Group>
    <Group $w={127}>
      <GroupBody $pl={2}>
        <Large $w={64}><LargeIcon><Slicer /></LargeIcon><LargeLine>切片器</LargeLine></Large>
        <Large $w={54}><LargeIcon><Timeline /></LargeIcon><LargeLine>日程表</LargeLine></Large>
      </GroupBody>
      <GroupLabel>筛选器</GroupLabel>
    </Group>
    <Group $w={67}>
      <GroupBody>
        <Large $w={66} $off><LargeIcon><LinkOff /></LargeIcon><LargeLine>链</LargeLine><LargeLine>接</LargeLine></Large>
      </GroupBody>
      <GroupLabel>链接</GroupLabel>
    </Group>
    <Group $w={210}>
      <GroupBody>
        <Large $w={68}><LargeIcon><TextBoxIcon /></LargeIcon><LargeLine>文本框</LargeLine><LargeLine><Caret /></LargeLine></Large>
        <Large $w={86}><LargeIcon><HeaderFooter /></LargeIcon><LargeLine>页眉和页脚</LargeLine></Large>
        <SmallCol $w={55}>
          <SmallRow $gap={12}><span /><WordArt /><Caret /></SmallRow>
          <SmallRow $gap={8}><span /><SignLine /><Caret /></SmallRow>
          <SmallRow $gap={8}><span /><ObjectIcon /></SmallRow>
        </SmallCol>
      </GroupBody>
      <GroupLabel>文本</GroupLabel>
    </Group>
    <Group $w={98}>
      <GroupBody $pl={9}>
        <SmallCol $w={88}>
          <SmallRow $gap={6}><SymbolGlyph>π</SymbolGlyph>公式<Caret $m={4} /></SmallRow>
          <SmallRow $gap={6}><SymbolGlyph>Ω</SymbolGlyph>符号</SmallRow>
        </SmallCol>
      </GroupBody>
      <GroupLabel>符号</GroupLabel>
    </Group>
    <Collapse><Chevron /></Collapse>
  </Ribbon>
);

const App: React.FC = () => (
  <Page>
    <Global />
    <Header>
      <TitleRow>
        <Qat>
          <Floppy /><QatGap $w={23} />
          <UndoIcon /><QatGap $w={9} />
          <WhiteCaret /><QatGap $w={14} />
          <UndoIcon dim /><QatGap $w={11} />
          <WhiteCaret dim /><QatGap $w={24} />
          <Customize />
        </Qat>
        <Title>工作簿3  -  Excel</Title>
        <ToolsBand>数据透视表工具</ToolsBand>
        <WindowBtns>
          <Login>登录</Login>
          <WinIcon><DisplayOpts /></WinIcon>
          <WinIcon><MinIcon /></WinIcon>
          <WinIcon><MaxIcon /></WinIcon>
          <WinIcon><CloseIcon /></WinIcon>
        </WindowBtns>
      </TitleRow>
      <TabRow>
        {tabs.map(([name, w]) => <Tab key={name} $w={w} $active={name === '插入'}>{name}</Tab>)}
        <ContextTabs>
          <Tab $w={72}>分析</Tab>
          <Tab $w={76}>设计</Tab>
        </ContextTabs>
        <TellMe><Bulb />告诉我你想要做什么</TellMe>
        <Share><PersonPlus />共享</Share>
      </TabRow>
    </Header>
    <RibbonBar />
    <FormulaZone>
      <NameBox>A1<Caret /></NameBox>
      <BarDots><i /><i /><i /></BarDots>
      <FxBox><CrossIcon /><TickIcon /><FxMark>fx</FxMark></FxBox>
      <FormulaInput>日期<DropTri /></FormulaInput>
    </FormulaZone>
    <Main>
      <SheetCol>
        <SheetTop>
          <Sheet />
          <VScroll>
            <ScrollBtn><Up /></ScrollBtn>
            <ScrollThumb $h={579} />
            <ScrollFill />
            <ScrollBtn><Down /></ScrollBtn>
          </VScroll>
        </SheetTop>
        <TabsBar>
          <TabNav><LeftTri /><RightTri /></TabNav>
          <SheetTab>Sheet4</SheetTab>
          <SheetTabColored>源数据</SheetTabColored>
          <TabSep />
          <AddSheet>+</AddSheet>
          <TabDots><i /><i /><i /></TabDots>
          <HScroll>
            <HBtn><LeftTri /></HBtn>
            <HThumb />
            <ScrollFill />
            <HBtn><RightTri /></HBtn>
          </HScroll>
        </TabsBar>
      </SheetCol>
      <FieldPane />
    </Main>
    <Status>
      <StatusLeft>就绪<MacroIcon /></StatusLeft>
      <StatusRight>
        <ViewBtn $on><NormalView /></ViewBtn>
        <ViewBtn><PageView /></ViewBtn>
        <ViewBtn><BreakView /></ViewBtn>
        <QatGap $w={6} />
        <svg width="12" height="3" viewBox="0 0 12 3"><rect width="12" height="3" fill="#6f6f6f" /></svg>
        <ZoomTrack><ZoomThumb /></ZoomTrack>
        <svg width="12" height="12" viewBox="0 0 12 12"><path d="M0 6h12M6 0v12" stroke="#6f6f6f" strokeWidth="2" /></svg>
        <ZoomValue>100%</ZoomValue>
      </StatusRight>
    </Status>
    <DeskStrip>
      <DeskLeft />
      <DeskGap />
      <DeskRight>
        <Clock>15:30 周五</Clock>
        <RedDot />
        <DeskEdge />
      </DeskRight>
    </DeskStrip>
  </Page>
);

export default App;
